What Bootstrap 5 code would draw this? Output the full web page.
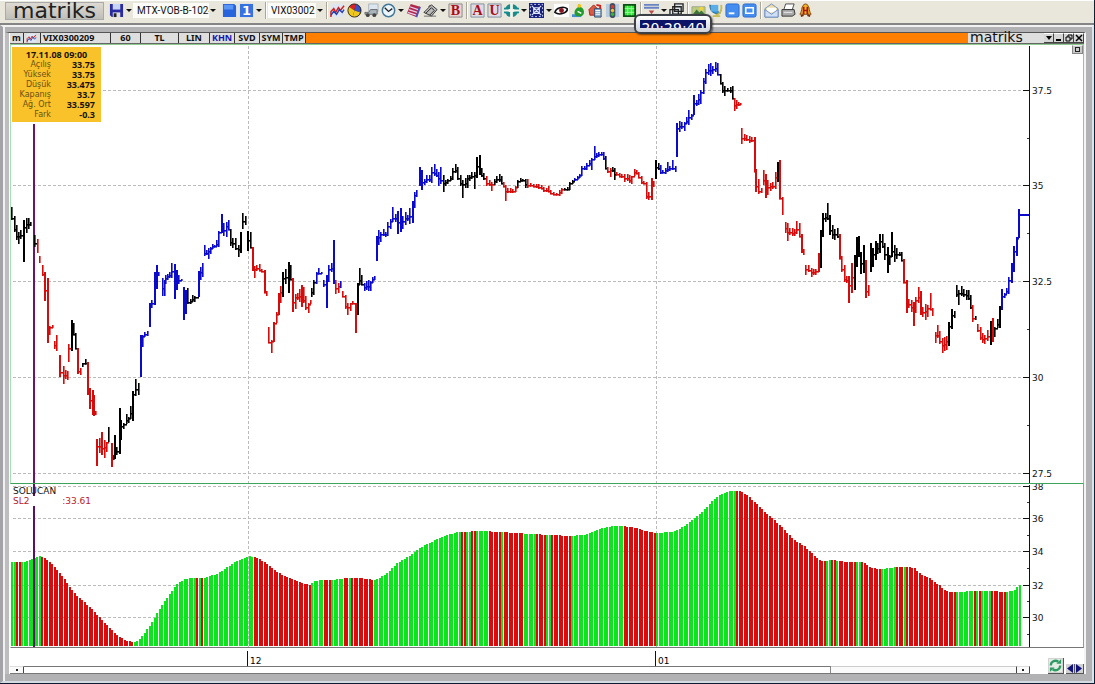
<!DOCTYPE html>
<html lang="tr">
<head>
<meta charset="utf-8">
<meta name="viewport" content="width=device-width, initial-scale=1">
<title>matriks - VIX0300209</title>
<link rel="stylesheet" href="https://cdn.jsdelivr.net/npm/bootstrap@5.3.0/dist/css/bootstrap.min.css">
<script src="https://cdn.jsdelivr.net/npm/bootstrap@5.3.0/dist/js/bootstrap.bundle.min.js"></script>
<style>
  body { font-family: "DejaVu Sans", Verdana, sans-serif; font-size: 9px; line-height: 10px; color: #111; background: #b2b2b4; }
  button { border: 0; padding: 0; background: none; color: inherit; font-weight: inherit; }
  .app-frame { border-right: 1px solid #0d2138; border-bottom: 1px solid #101c30; }
  .toolbar { height: 25px; background: #e9e7dc; border-top: 1px solid #fff; border-bottom: 2px solid #858585; padding-bottom: 3px; padding-left: 5px; }
  .brand { width: 99px; height: 18px; margin-right: 4px; background: linear-gradient(#dcdad2, #c0beb8); border: 1px solid #aaa; font-size: 22px; line-height: 16px; color: #222; }
  .tool { width: 17px; height: 17px; display: flex; align-items: center; justify-content: center; flex: none; }
  .tool svg { width: 15px; height: 15px; display: block; }
  .drop { width: 8px; height: 16px; display: flex; align-items: center; justify-content: center; flex: none; }
  .drop::after { content: ""; border: 3px solid transparent; border-top-color: #111; border-bottom: 0; }
  .divider { width: 5px; height: 17px; flex: none; background: linear-gradient(90deg, transparent 2px, #aaa79a 2px, #aaa79a 3px, #fff 3px, #fff 4px, transparent 4px); }
  .combo { appearance: none; border: 0; border-radius: 0; background: #fbfbf8; height: 15px; padding: 0 0 0 4px; font: 10px/15px Roboto, sans-serif; color: #111; overflow: hidden; text-overflow: clip; flex: none; }
  .layout-pick { width: 76px; }
  .symbol-pick { width: 48px; padding-left: 3px; }
  .workspace { border-top: 2px solid #f2f2f2; border-left: 3px solid #a4a4a8; border-right: 2px solid #dfe3ea; border-bottom: 2px solid #d5dbe3; padding: 5px 6px 7px 2px; box-shadow: inset 2px 0 #f0f0f0; min-height: 0; }
  .chart-window { border-left: 4px solid #bdbdc0; border-right: 2px solid #f4f4f4; border-top: 1px solid #555; background: #fff; padding-left: 1px; min-height: 0; }
  .titlebar { height: 10px; background: #ff8000; font: bold 9px/10px "Noto Sans", sans-serif; border-bottom: 1px solid #666; box-sizing: content-box; flex: none; }
  .cell { background: #dedede; border-right: 1px solid #333; text-align: center; flex: none; height: 10px; line-height: 10px; white-space: nowrap; }
  .w-sym { width: 70px; text-align: left; padding-left: 2px; } .w-per { width: 30px; } .w-type { width: 38px; } .w-lin { width: 31px; }
  .w-mini { width: 14px; } .w-act { width: 25px; } .w-last { width: 23px; } .w-ico { width: 17px; }
  .cell-on { color: #1414b4; }
  .brand-small { width: 76px; background: #dedede; font: 14px/9px "DejaVu Sans", sans-serif; height: 10px; padding-left: 2px; }
  .win-btn { width: 10px; height: 10px; background: #d6d6d6; border-right: 1px solid #444; border-bottom: 1px solid #444; border-top: 1px solid #fff; flex: none; display: flex; align-items: center; justify-content: center; }
  .win-btn svg { width: 8px; height: 8px; flex: none; }
  .pane { overflow: hidden; border-right: 1px solid #8fca8f; min-height: 0; }
  .pane svg { display: block; width: 100%; height: 100%; position: absolute; inset: 0; }
  .pane-price { flex: 440 1 0; border-left: 1px solid #a5e0b5; border-top: 1px solid #8fca8f; border-bottom: 1px solid #3da45c; }
  .pane-study { flex: 164 1 0; border-left: 1px solid #fff; border-right-color: #999; border-bottom: 1px solid #777; }
  .info { top: 2px; left: 1px; width: 89px; padding: 2px 6px 2px 2px; background: #f9c22b; outline: 2px solid #fff; }
  .info table { width: 100%; border-collapse: collapse; font: bold 9px/10px "Noto Sans", sans-serif; }
  .info td, .info th { padding: 0; text-align: right; color: #18140a; }
  .info caption { caption-side: top; padding: 0 0 0 4px; text-align: center; color: #18140a; font: inherit; line-height: 11px; }
  .info th { font: 8px/10px "DejaVu Sans", sans-serif; width: 37px; color: #69510f; }
  .study-name { top: 2px; left: 2px; line-height: 10px; }
  .study-name .val { color: #b8202c; width: 78px; }
  .corner { top: 0; right: 0; width: 11px; height: 9px; background: #c9c9c9; border: 1px solid #888; border-top-color: #eee; display: flex; align-items: center; justify-content: center; }
  .corner::after { content: ""; width: 5px; height: 5px; border: 1px solid #222; }
  .time-strip { height: 26px; flex: none; }
  .time-strip svg { display: block; width: 100%; height: 18px; }
  .hscroll { height: 8px; border-bottom: 1px solid #777; }
  .hscroll button { width: 14px; background: #fafafa; border-top: 1px solid #ddd; border-right: 1px solid #444; flex: none; display: flex; align-items: center; justify-content: center; }
  .hscroll button::after { content: ""; width: 2px; height: 2px; background: #222; }
  .hscroll .end { border-left: 1px solid #444; }
  .thumb { flex: 806 1 0; border-top: 1px solid #777; border-right: 1px solid #888; }
  .track { flex: 185 1 0; background: #fafafa; border-top: 1px solid #ccc; }
  .nav-tools { width: 54px; flex: none; padding-left: 18px; }
  .nav-tools button { background: #d2d2d2; border-right: 1px solid #555; border-bottom: 1px solid #555; display: flex; flex: none; }
  .nav-tools .time-icon { width: 100%; height: 100%; display: block; }
  .refresh { width: 16px; height: 16px; margin-right: 2px; } .step { width: 9px; height: 10px; }
  .clock { left: 634px; top: 14px; width: 78px; height: 20px; border: 2px solid #3c3f46; border-radius: 6px; background: linear-gradient(#fff, #d0d3da); padding: 4px; box-shadow: 1px 1px 2px #0008; z-index: 3; }
  .clock output { display: block; height: 8px; overflow: hidden; background: #0c1468; color: #fff; font-size: 14px; line-height: 16px; text-align: center; }
</style>
</head>
<body>
<svg class="d-none" aria-hidden="true">
  <symbol id="lines" viewBox="0 0 16 16"><path d="M1 1h14v14H1z" fill="#dfe6f3"/><path d="M1 15V9l3-3 2 4 3-5 2 3 4-5" fill="none" stroke="#c22" stroke-width="1.6"/><path d="M1 13l3-4 3 3 3-5 3 3 2-3" fill="none" stroke="#2540b0" stroke-width="1.5"/></symbol>
</svg>

<div class="app-frame vh-100 d-flex flex-column position-relative overflow-hidden">
  <header class="toolbar d-flex align-items-center flex-shrink-0">
    <div class="brand text-center">matriks</div>
    <button class="tool" aria-label="Kaydet"><svg viewBox="0 0 16 16"><path d="M1 1h14v14H3l-2-2z" fill="#2929a0"/><path d="M4 1h8v6H4z" fill="#c8d4f4"/><path d="M4 10h8v5H4z" fill="#ddd"/><path d="M5 11h3v4H5z" fill="#222"/></svg></button>
    <button class="drop" aria-label="Kaydet seçenekleri"></button>
    <select class="combo layout-pick" aria-label="Sayfa"><option>MTX-VOB-B-1024</option></select>
    <button class="drop me-1" aria-label="Sayfa listesi"></button>
    <button class="tool" aria-label="Yeni sayfa"><svg viewBox="0 0 16 16"><path d="M1 1h12l2 2v12H1z" fill="#2864dc"/><path d="M2 2h10v5H2z" fill="#5a94f4"/></svg></button>
    <button class="tool" aria-label="Sayfa 1"><svg viewBox="0 0 16 16"><path d="M1 1h14v14H1z" fill="#3574e0"/><text x="8" y="13" font-size="14" font-weight="bold" fill="#fff" text-anchor="middle">1</text></svg></button>
    <button class="drop" aria-label="Sayfa seç"></button>
    <span class="divider"></span>
    <select class="combo symbol-pick" aria-label="Sembol"><option>VIX03002</option></select>
    <button class="drop" aria-label="Sembol listesi"></button>
    <span class="divider"></span>
    <button class="tool" aria-label="Grafik"><svg><use href="#lines"/></svg></button>
    <button class="tool" aria-label="Pasta"><svg viewBox="0 0 16 16"><circle cx="8" cy="8" r="7" fill="#222"/><path d="M8 8L2 4a7 7 0 0 1 7-3z" fill="#d22"/><path d="M8 8l1-7a7 7 0 0 1 5 9z" fill="#3550c8"/><path d="M8 8l6 2a7 7 0 0 1-8 5z" fill="#efc71c"/><path d="M8 8l-2 7a7 7 0 0 1-4-11z" fill="#efc71c"/><circle cx="8" cy="8" r="7" fill="none" stroke="#333"/></svg></button>
    <button class="tool" aria-label="Takip"><svg viewBox="0 0 16 16"><path d="M5 1h10v8H5z" fill="#dce6f0" stroke="#a9b3bb"/><path d="M1 10h4l2-3h7v5H1z" fill="#a7b7bd" stroke="#666"/><circle cx="4" cy="13" r="2" fill="#444"/><circle cx="11" cy="13" r="2" fill="#444"/></svg></button>
    <button class="tool" aria-label="Saat"><svg viewBox="0 0 16 16"><circle cx="8" cy="8" r="6.6" fill="#eaf6fc" stroke="#43789a" stroke-width="1.6"/><path d="M4 5l4 4 4-3" fill="none" stroke="#222" stroke-width="1.4"/></svg></button>
    <button class="drop" aria-label="Saat seçenekleri"></button>
    <button class="tool" aria-label="Haberler"><svg viewBox="0 0 16 16"><path d="M5 1l10 3-4 11L1 11z" fill="#b02748"/><path d="M4 4l9 3M3 7l9 3M2 10l9 3" stroke="#e6ccec" stroke-width="1.4"/><path d="M15 4l-4 11" stroke="#4a52b8" stroke-width="2"/></svg></button>
    <button class="tool" aria-label="Çizim"><svg viewBox="0 0 16 16"><path d="M1 10l8-8 6 5-6 7z" fill="#bbb" stroke="#333"/><path d="M3 11l6-6 3 3-5 5M8 2l-2 2" fill="none" stroke="#222"/><path d="M1 14h13" stroke="#666"/></svg></button>
    <button class="drop" aria-label="Çizim seçenekleri"></button>
    <button class="tool" aria-label="B"><svg viewBox="0 0 16 16"><path d="M1 1h14v14H1z" fill="#e6d7d3" stroke="#888"/><text x="8" y="13" font-family="Liberation Serif" font-size="15" font-weight="bold" fill="#a80d18" text-anchor="middle">B</text></svg></button>
    <span class="divider"></span>
    <button class="tool" aria-label="A"><svg viewBox="0 0 16 16"><path d="M1 1h14v14H1z" fill="#dcdce4" stroke="#8090a0"/><text x="8" y="13" font-family="Liberation Serif" font-size="15" font-weight="bold" fill="#a80d18" text-anchor="middle">A</text></svg></button>
    <button class="tool" aria-label="U"><svg viewBox="0 0 16 16"><path d="M1 1h14v14H1z" fill="#dcdce4" stroke="#8090a0"/><text x="8" y="13" font-family="Liberation Serif" font-size="15" font-weight="bold" fill="#a80d18" text-anchor="middle">U</text></svg></button>
    <button class="tool" aria-label="Hizala"><svg viewBox="0 0 16 16"><circle cx="8" cy="8" r="7" fill="#168c8c"/><path d="M8 0v16M0 8h16" stroke="#f2f2ea" stroke-width="3"/><path d="M0 6h5M0 10h5M11 6h5M11 10h5" stroke="#168c8c" stroke-width="2"/></svg></button>
    <button class="drop" aria-label="Hizala seçenekleri"></button>
    <button class="tool" aria-label="Yerleşim"><svg viewBox="0 0 16 16"><path d="M0 0h16v16H0z" fill="#18207c"/><path d="M3 3l10 10M13 3L3 13M5 5h6v6H5z" fill="none" stroke="#dfe7ff" stroke-width="1.2"/><path d="M1.500 1.500h13v13h-13z" fill="none" stroke="#cbd6ff" stroke-dasharray="2 2"/></svg></button>
    <button class="drop" aria-label="Yerleşim seçenekleri"></button>
    <button class="tool" aria-label="İzle"><svg viewBox="0 0 16 16"><path d="M0 1h16v14H0z" fill="#fff"/><path d="M1 10c1-5 9-7 13-4 1 4-8 8-13 4z" fill="none" stroke="#111" stroke-width="1.8"/><circle cx="8" cy="8" r="2.600" fill="#8c1522"/></svg></button>
    <button class="tool" aria-label="Piyasa"><svg viewBox="0 0 16 16"><path d="M1 12h10v3H1z" fill="#438cd0"/><path d="M8 1l2 3c5 2 5 9 1 10H6c-4-2-2-8 1-9z" fill="#239b2d"/><circle cx="9" cy="3" r="2" fill="#f0c51c"/><path d="M7 9l4 2" stroke="#fff" stroke-width="1.5"/></svg></button>
    <button class="tool" aria-label="Emir"><svg viewBox="0 0 16 16"><path d="M1 7l5-5 5 5v6H2z" fill="#dd5a40" stroke="#a42418"/><path d="M7 6h7v9H7z" fill="#8aaccb" stroke="#374d6c"/><path d="M8 8h5M8 10h5M8 12h5" stroke="#fff"/><path d="M9 2l4 1v3" stroke="#d31c1c" stroke-width="2" fill="none"/></svg></button>
    <button class="tool" aria-label="Durum"><svg viewBox="0 0 16 16"><path d="M1 1h14v14H1z" fill="#b8cde2"/><rect x="5" y="0" width="6" height="16" rx="3" fill="#455062"/><circle cx="8" cy="4" r="1.800" fill="#e3342b"/><circle cx="8" cy="8" r="1.800" fill="#f3c22e"/><circle cx="8" cy="12" r="1.800" fill="#31b53b"/></svg></button>
    <button class="tool" aria-label="Tablo"><svg viewBox="0 0 16 16"><path d="M2 2h12v12H2z" fill="#38e43c" stroke="#0b4f15" stroke-width="2"/><path d="M3 6h10M3 10h10M6 3v10M10 3v10" stroke="#9aff9a"/></svg></button>
    <span class="divider"></span>
    <button class="tool" aria-label="Pencereler"><svg viewBox="0 0 16 16"><path d="M0 2h16M0 5h16" stroke="#6883c4" stroke-width="2"/><path d="M5 8h6l-3 4z" fill="#c24848"/><path d="M0 14h16" stroke="#6883c4" stroke-width="2"/></svg></button>
    <button class="drop" aria-label="Pencere seçenekleri"></button>
    <button class="tool" aria-label="Basamakla"><svg viewBox="0 0 16 16" fill="#dde6ea" stroke="#222" stroke-width="1.4"><path d="M6 1h9v8H6zM4 4h9v8H4zM1 7h9v8H1z"/></svg></button>
    <span class="divider"></span>
    <button class="tool" aria-label="Resim"><svg viewBox="0 0 16 16"><path d="M1 4h14v10H1z" fill="#b9cc7e" stroke="#a0a48a"/><path d="M2 12l4-5 3 3 2-2 4 4z" fill="#41733d"/><circle cx="11" cy="6" r="2" fill="#f1d441"/></svg></button>
    <button class="tool" aria-label="Bağlantı"><svg viewBox="0 0 16 16"><path d="M2 2c0 8 5 10 11 9z" fill="#3c98dc" stroke="#216090"/><path d="M3 2h8v7H3z" fill="#5aaee8"/><path d="M14 2c1 6-1 10-6 11M5 14h8" fill="none" stroke="#c6bd54" stroke-width="2"/></svg></button>
    <button class="tool" aria-label="Küçült"><svg viewBox="0 0 16 16"><rect x="1" y="1" width="14" height="14" rx="2" fill="#458ef0" stroke="#2a6bd0"/><path d="M4 11h6" stroke="#fff" stroke-width="2"/></svg></button>
    <button class="tool" aria-label="Büyüt"><svg viewBox="0 0 16 16"><rect x="1" y="1" width="14" height="14" rx="2" fill="#458ef0" stroke="#2a6bd0"/><path d="M4 5h8v6H4z" fill="none" stroke="#fff" stroke-width="1.600"/></svg></button>
    <span class="divider"></span>
    <button class="tool" aria-label="E-posta"><svg viewBox="0 0 16 16"><path d="M1 6l7-5 7 5v9H1z" fill="#eed9a2" stroke="#6f8cc0"/><path d="M3 5h10v5H3z" fill="#fff"/><path d="M1 7l7 5 7-5v8H1z" fill="#cfe0f6" stroke="#6f8cc0"/></svg></button>
    <button class="tool" aria-label="Yazdır"><svg viewBox="0 0 16 16"><path d="M5 1h9l-2 6H3z" fill="#fff" stroke="#444"/><path d="M1 7h13l1 5-3 2H1z" fill="#aaa" stroke="#333"/><path d="M3 10h9" stroke="#eee"/></svg></button>
    <button class="tool" aria-label="Alarm"><svg viewBox="0 0 16 16"><path d="M8 1c-5 1-3 7-6 11h12c-3-4-1-10-6-11z" fill="#f3b421" stroke="#7c4308"/><path d="M6 4v8M10 4v8M6 8h4" stroke="#a3150e" stroke-width="1.800"/><path d="M3 14l3-1M13 14l-3-1" stroke="#7c2b08" stroke-width="2"/></svg></button>
  </header>
  <div class="clock position-absolute"><output>20:29:40</output></div>

  <main class="workspace flex-grow-1 d-flex flex-column">
    <section class="chart-window flex-grow-1 d-flex flex-column">
      <div class="titlebar d-flex">
        <button class="cell w-mini">m</button>
        <button class="cell w-ico" aria-label="Grafik tipi"><svg width="15" height="10" class="d-block"><use href="#lines"/></svg></button>
        <button class="cell w-sym">VIX0300209</button>
        <button class="cell w-per">60</button>
        <button class="cell w-type">TL</button>
        <button class="cell w-lin">LIN</button>
        <button class="cell w-act cell-on">KHN</button>
        <button class="cell w-act">SVD</button>
        <button class="cell w-last">SYM</button>
        <button class="cell w-last">TMP</button>
        <div class="brand-small ms-auto">matriks</div>
        <button class="win-btn" aria-label="Menü"><svg viewBox="0 0 8 8"><path d="M1 2h6L4 6z"/></svg></button>
        <button class="win-btn" aria-label="Simge durumu"><svg viewBox="0 0 8 8"><path d="M1 5h5v2H1z"/></svg></button>
        <button class="win-btn" aria-label="Önceki boyut"><svg viewBox="0 0 8 8" fill="none" stroke="#000"><path d="M3 3V1h4v4H5M1 3h4v4H1z"/></svg></button>
        <button class="win-btn" aria-label="Kapat"><svg viewBox="0 0 8 8"><path d="M1 1l6 6M7 1L1 7" stroke="#000" stroke-width="1.500"/></svg></button>
      </div>

      <div class="pane pane-price position-relative">
        <svg id="price" role="img" aria-label="Fiyat grafiği"></svg>
        <div class="info position-absolute">
          <table>
            <caption>17.11.08 09:00</caption>
            <tr><th scope="row">Açılış</th><td>33.75</td></tr>
            <tr><th scope="row">Yüksek</th><td>33.75</td></tr>
            <tr><th scope="row">Düşük</th><td>33.475</td></tr>
            <tr><th scope="row">Kapanış</th><td>33.7</td></tr>
            <tr><th scope="row">Ağ. Ort</th><td>33.597</td></tr>
            <tr><th scope="row">Fark</th><td>-0.3</td></tr>
          </table>
        </div>
        <button class="corner position-absolute" aria-label="Bölmeyi büyüt"></button>
      </div>

      <div class="pane pane-study position-relative">
        <svg id="study" role="img" aria-label="Solucan göstergesi"></svg>
        <div class="study-name position-absolute">
          <div>SOLUCAN</div>
          <div class="val d-flex justify-content-between bg-white"><span>SL2</span><span>:33.61</span></div>
        </div>
      </div>

      <div class="time-strip d-flex align-items-end">
        <div class="flex-grow-1">
          <svg id="times"></svg>
          <div class="hscroll d-flex">
            <button aria-label="Sola kaydır"></button><div class="thumb"></div><div class="track"></div><button class="end" aria-label="Sağa kaydır"></button>
          </div>
        </div>
        <div class="nav-tools d-flex align-items-end">
          <button class="refresh" aria-label="Yenile"><svg class="time-icon" viewBox="0 0 16 16"><path d="M1 1h14v14H1z" fill="#e4ece4"/><path d="M3 8a5 5 0 0 1 8-4M13 8a5 5 0 0 1-8 4" fill="none" stroke="#2c9a62" stroke-width="2.400"/><path d="M9 6h5V1zM7 10H2v5z" fill="#2c9a62"/></svg></button>
          <button class="step" aria-label="Geri"><svg class="time-icon" viewBox="0 0 8 9"><path d="M7 0v9L1 4.500z" fill="#10107a"/></svg></button>
          <button class="step" aria-label="İleri"><svg class="time-icon" viewBox="0 0 8 9"><path d="M1 0v9l6-4.500z" fill="#10107a"/></svg></button>
        </div>
      </div>
    </section>
  </main>
</div>

<script>
// Price bars: "colour x,high,low x,high,low ..." on a 1073-unit wide sheet whose left edge is 10
const bars = `
k 12,207,220 15,216,232 17,225,240 19,232,244 21,230,239 24,220,262 27,218,233 29,218,229 31,222,226 35,235,247
r 38,239,253 40,256,263 43,265,276 45,272,301 48,278,343 50,326,335 53,325,328 55,341,349 57,335,351 60,355,377 64,366,384 66,370,379 68,371,380 69,344,362
k 72,320,351 74,323,334 76,333,348
r 78,348,374 81,368,375
k 83,363,367 86,359,363
r 88,362,395 90,388,409 93,390,415 94,395,416 96,411,415 97,439,466 100,438,453 102,432,455 105,440,458 107,442,452
k 109,427,442
r 112,443,467
k 114,455,460 115,435,459 117,447,455 120,408,454 121,420,440 124,423,429 127,414,424 129,417,423 131,406,419 133,391,421 136,379,396 139,383,395
b 141,335,377 143,335,347 145,332,337 148,331,336 150,303,327 152,300,308 155,272,305 157,265,289 159,272,276 163,278,296 165,280,296 166,275,284 168,274,280 170,272,278 172,263,278 175,264,299 177,270,290 179,275,284 182,279,281 184,287,320 186,290,314
k 188,288,304 191,299,304 193,295,302 195,296,302
b 199,271,297 201,267,280 203,263,277 205,245,256 207,250,255 209,248,259 211,247,254 213,244,249 215,245,247 217,240,247 219,231,247 222,214,233 224,223,236 227,222,237 229,220,229
k 231,229,246 233,238,248 236,238,250 239,245,257 241,232,253 243,213,229 246,216,225 248,231,251 251,232,247
r 253,247,271 255,266,278 257,265,271 260,264,271 262,269,271 265,270,293 267,291,296 269,327,343 272,340,353 274,322,342 277,312,323 279,293,315 281,286,303
k 283,272,297 286,269,284 289,262,293 291,265,280
r 293,278,312 296,294,309 298,293,300 300,289,302 302,285,307 304,287,303 306,296,310 309,303,313 311,300,304
k 312,288,297 314,280,295
b 317,272,284 319,268,273 322,272,274 324,280,287 327,275,308 329,265,282 332,263,272 334,240,284
r 336,280,294 339,283,293
b 341,281,288
r 343,291,297 346,295,309 348,303,315 351,303,311 353,301,303 356,303,333
k 358,283,315 360,268,285 362,275,285
b 365,283,291 367,281,290 369,280,291 371,281,291 373,277,283 375,276,280 377,236,261 379,230,245 381,232,242 384,229,236 386,232,237 388,222,236 391,219,229 393,207,222 396,214,222 398,211,234 401,208,232 403,216,229 406,212,225 408,215,221 410,208,224 413,201,223 415,192,208 417,190,197 420,167,186 422,170,190 425,179,185 427,175,183 430,175,182 432,167,183 435,164,176 437,169,177 439,172,186 441,167,184
k 444,175,192 446,180,186 448,179,184 451,176,181 453,168,180 456,164,173 458,167,180 461,175,186 463,180,198 466,178,188 468,175,188 470,175,181 472,172,179 475,172,189 477,157,178 480,155,175 482,168,177 484,173,180
r 487,176,186 490,180,186 492,182,191
k 495,179,185 497,176,183 500,174,182 502,176,184
r 504,182,187 506,185,201 508,188,193 511,188,193 513,189,193 516,186,192
k 518,180,188 521,178,182 523,179,181 526,179,188
r 528,179,188 531,183,186 534,184,187 537,184,188 539,184,189 542,185,189 544,187,192 547,188,192 549,186,192 551,190,194 554,192,194 557,193,195 560,190,196 562,188,194
k 565,188,190 568,187,190 570,182,190 573,180,184
b 575,178,181 578,176,180 580,174,178 582,166,176 585,166,170 587,163,170 590,160,166 592,158,170 595,146,160 597,153,158 599,152,157 602,152,155 604,152,160
k 606,156,168
r 608,167,173 611,168,177
k 613,167,172 615,168,180
r 617,172,175 620,173,177 622,174,178 625,174,182 628,174,181 630,175,183 632,176,184 635,169,176 637,170,174 639,172,178 642,176,184 644,181,183 647,182,199 649,192,200 652,178,200 654,181,187
k 656,160,179 659,163,170
b 661,165,174 663,170,173 666,168,174 668,162,172 670,166,171 673,160,170 676,166,172 677,123,157 680,121,132 682,122,129 685,122,131 687,117,124 689,110,125 692,114,120 694,95,115 697,100,106 699,94,105 701,90,104 704,78,94 706,69,84 709,64,75 711,63,76 713,66,74 716,62,72 718,63,74
k 721,74,84 723,82,93 725,86,96 728,88,91 731,87,93 733,86,98
r 735,98,111 737,100,109 739,102,106 741,103,105 742,128,144 745,134,141 747,135,141 750,136,143 752,137,142 755,137,172 756,169,192 759,179,194 762,188,193 764,170,185 766,174,198 768,180,195 771,183,191 773,182,189 776,172,189
k 778,162,182
r 780,160,199 783,197,215 786,222,233 788,223,241 790,228,235 793,228,236 795,229,236 797,221,234 800,223,237 802,234,253 804,249,255 806,265,275 809,265,272 812,268,277 814,269,275 816,269,275 819,253,272
k 821,230,268 823,213,237 826,213,222 828,203,220 830,215,235 833,225,239 835,229,240 838,228,238
r 840,234,259 842,256,272 845,265,282 847,276,283 849,276,303 852,263,293
k 855,255,290 857,237,267 859,236,257 861,252,274 864,245,273
r 866,260,298 869,285,296
k 871,243,272 873,248,267 876,241,260 878,243,254 880,234,253 883,234,248 885,243,260 888,247,273 890,255,265 892,232,257 895,245,262 897,248,259 900,252,256 902,252,260
r 904,259,283 907,280,313 909,299,308 912,300,312 914,302,326 916,297,313 919,287,303 921,291,315 923,307,317 926,304,320 928,305,317 931,293,310 933,308,316 936,332,343 938,325,338 940,331,344 943,338,353 945,337,351 947,336,350
k 949,322,346 952,309,329 955,311,318 957,285,297 959,290,305 962,286,296 964,289,297 967,290,300 969,290,300 971,295,309
r 973,305,322
k 976,316,320
r 978,324,332 981,327,340 983,333,343 985,335,344 988,330,341
k 991,321,345
r 993,318,342
k 995,327,337 998,319,328 1000,306,328
b 1002,289,310 1005,293,298 1007,288,294 1009,277,294 1012,263,283 1014,246,272 1017,237,256 1019,209,238`;

// Study outline (x, top) and the x positions at which the bar colour flips, starting from green
const curve = [[11,562],[22,562],[32,559],[39,556],[43,558],[52,565],[62,577],[67,585],[76,596],[90,608],[100,619],[108,627],[116,635],[124,640],[132,642],[138,640],[150,624],[160,606],[170,592],[176,584],[184,579],[190,578],[202,578],[216,574],[225,568],[235,561],[248,556],[256,558],[265,563],[275,571],[285,577],[296,581],[308,585],[314,581],[322,580],[332,580],[345,578],[358,578],[373,580],[380,577],[387,572],[395,564],[410,555],[420,547],[432,541],[445,535],[458,532],[480,531],[500,532],[515,533],[530,534],[550,535],[569,536],[582,535],[592,532],[602,528],[612,526],[622,526],[635,528],[648,532],[656,533],[667,532],[675,531],[685,525],[695,517],[705,508],[714,498],[722,493],[730,491],[740,491],[747,496],[755,503],[765,513],[780,526],[792,539],[803,546],[811,553],[818,560],[822,561],[832,560],[845,562],[860,562],[864,563],[870,568],[880,569],[895,567],[905,567],[913,568],[920,574],[930,579],[938,585],[945,591],[952,592],[960,592],[970,591],[990,591],[1005,592],[1013,590],[1020,584]];
const flips = [16,20,39,132,194,197,199,202,252,309,323,331,343,347,350,373,459,466,471,476,488,500,503,523,534,545,550,569,622,654,734,824,829,834,837,854,861,879,896,902,905,956,972,975,978,981,984,986,991,1006];
const inks = { k: '#000', r: '#d60c0c', b: '#0a0ac8' };

// Maps sheet units onto the current size of an svg
function sheet(id, top, height) {
  const el = document.getElementById(id), w = el.clientWidth, h = el.clientHeight;
  return { el, w, h, x: v => v > 1021 ? w - (1083 - v) : Math.round((v - 11) * (w - 62) / 1010), y: v => Math.round((v - top) * h / height) };
}
const rect = (x, y, w, h, fill) => `<rect x="${x}" y="${y}" width="${w}" height="${h}" fill="${fill}"/>`;
function scale(s, ticks, minors, vtop) {
  let out = '';
  for (const [y, label] of ticks) {
    out += `<path d="M2 ${s.y(y) + .5}H${s.x(1022)}" stroke="#bbb" stroke-dasharray="3 2"/>`
        + rect(s.x(1023), s.y(y), 7, 1, '#111') + `<text x="${s.x(1032)}" y="${s.y(y) + 4}" fill="#111">${label}</text>`;
  }
  for (const y of minors) out += rect(s.x(1027), s.y(y), 2, 1, '#333');
  for (const x of [248, 656]) out += `<path d="M${s.x(x) + .5} ${vtop}V${s.h}" stroke="#bbb" stroke-dasharray="3 2"/>`;
  return out + rect(s.x(1029), 1, 1, s.h - 1, '#111');
}
function draw() {
  const p = sheet('price', 45, 438);
  let out = scale(p, [[90,'37.5'],[185,'35'],[281,'32.5'],[377,'30'],[473,'27.5']], [138,233,329,425], 1);
  out += rect(p.x(33), 0, 2, p.h, '#6c136c');
  const list = [];
  for (const line of bars.trim().split('\n')) {
    const [ink, ...items] = line.split(' ');
    for (const t of items) list.push([...t.split(',').map(Number), inks[ink]]);
  }
  list.forEach(([x, hi, lo, c], i) => {
    out += rect(p.x(x) - 1, p.y(hi), lo - hi > 18 ? 2 : 1.6, p.y(lo) - p.y(hi), c);
    const n = list[i + 1];
    if (n && n[0] - x < 5) {
      const a = Math.max(hi, n[1]), b = Math.min(lo, n[2]);
      if (a <= b) out += rect(p.x(x) - 1, p.y((a + b) / 2), p.x(n[0]) - p.x(x) + 1, 1.6, c);
    }
  });
  out += rect(p.x(1019), p.y(214), p.x(1029) - p.x(1019), 2, inks.b);
  p.el.innerHTML = out;

  const s = sheet('study', 484, 163);
  out = scale(s, [[486,'38'],[518,'36'],[551,'34'],[585,'32'],[617,'30']], [502,535,568,601,634], 2);
  let k = 0, f = 0;
  for (let x = 11; x < 1020; x += 2.5) {
    while (k < curve.length - 2 && curve[k + 1][0] < x) k++;
    while (f < flips.length && flips[f] <= x) f++;
    const [x0, y0] = curve[k], [x1, y1] = curve[k + 1];
    const y = s.y(y0 + (y1 - y0) * (x - x0) / (x1 - x0));
    out += rect(s.x(x), y, 2, s.y(646) - y, f % 2 ? '#dc0a0a' : '#0be51c');
  }
  out += rect(s.x(33), 0, 2, s.h, '#5c0f66');
  s.el.innerHTML = out;

  const t = document.getElementById('times');
  t.innerHTML = [[248,'12'],[656,'01']].map(([x, l]) => rect(s.x(x), 3, 1, 15, '#111') + `<text x="${s.x(x) + 3}" y="16">${l}</text>`).join('');
}
draw();
addEventListener('resize', draw);
</script>
</body>
</html>
